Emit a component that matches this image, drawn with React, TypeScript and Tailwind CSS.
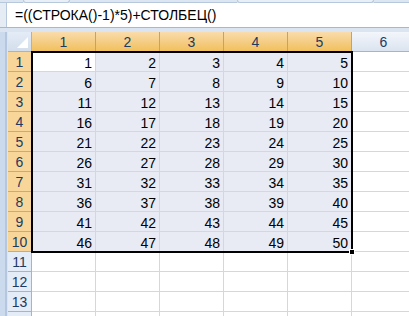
const COLS = [1, 2, 3, 4, 5, 6]
const ROWS = Array.from({ length: 14 }, (_, i) => i + 1)

function ColHeader({ n }: { n: number }) {
  const sel = n <= 5
  return (
    <div
      className={`h-5 w-16 shrink-0 border-r border-b flex items-center justify-center text-[14px] leading-none ${
        sel
          ? 'bg-gradient-to-b from-[#f9dcaa] to-[#f1c05c] border-r-[#f29536] border-b-[#f29536] text-[#1e3a5f]'
          : 'bg-gradient-to-b from-[#f3f6fb] to-[#dbe4f0] border-r-[#9eb6ce] border-b-[#9eb6ce] text-[#1e3a5f]'
      }`}
    >
      {n}
    </div>
  )
}

function RowHeader({ n }: { n: number }) {
  const sel = n <= 10
  return (
    <div
      className={`h-5 w-6 shrink-0 border-r border-b flex items-center justify-center text-[14px] leading-none ${
        sel
          ? 'bg-[#f8d598] border-r-[#f29536] border-b-[#f3a13f] text-[#1e3a5f]'
          : 'bg-[#e4ecf7] border-r-[#9eb6ce] border-b-[#9eb6ce] text-[#1e3a5f]'
      }`}
    >
      {/* row 14 only peeks in at the bottom edge */}
      {n < 14 ? n : ''}
    </div>
  )
}

function Cell({ r, c }: { r: number; c: number }) {
  const inRange = r <= 10 && c <= 5
  const active = r === 1 && c === 1
  const bg = inRange && !active ? 'bg-[#e8eaf4]' : 'bg-white'
  return (
    <div
      className={`h-5 w-16 shrink-0 border-r border-b border-[#d0d7e5] ${bg} flex items-end justify-end pr-[3px] pb-[1px] text-[14px] leading-none text-black`}
    >
      {inRange ? (r - 1) * 5 + c : ''}
    </div>
  )
}

export default function App() {
  return (
    <div
      className="w-[409px] h-[316px] overflow-hidden bg-white flex flex-col"
      style={{ fontFamily: '"Liberation Sans", Arial, sans-serif' }}
    >
      {/* ribbon edge */}
      <div className="h-[3px] shrink-0 bg-[#dce6f2] flex">
        <div className="w-[23px] border-b border-[#b7c7dc]" />
        <div className="w-[47px] border-x border-b border-[#b7c7dc] rounded-b-sm bg-[#e9eff7]" />
        <div className="w-[167px] border-b border-[#b7c7dc]" />
        <div className="w-[137px] border-x border-b border-[#b7c7dc] rounded-b-sm bg-[#e9eff7]" />
        <div className="flex-1 border-b border-[#b7c7dc]" />
      </div>

      {/* formula bar */}
      <div className="h-[25px] shrink-0 flex border-b border-[#a7b8cc]">
        <div className="w-[7px] bg-[#e6ecf4] border-r border-[#b7c7dc]" />
        <div className="flex-1 bg-white flex items-center pl-[8px] text-[14px] text-black">
          =((СТРОКА()-1)*5)+СТОЛБЕЦ()
        </div>
      </div>
      <div className="h-[4px] shrink-0 bg-[#dbe5f1]" />

      {/* sheet */}
      <div className="flex flex-1 min-h-0">
        <div className="w-[7px] shrink-0 bg-[#cbdaec] border-r-2 border-[#b4c7df]" />
        <div className="w-[1px] shrink-0 bg-[#dbe5f1]" />
        <div className="relative flex flex-col">
          <div className="flex">
            <div className="h-5 w-6 shrink-0 border-r border-b border-[#9eb6ce] bg-gradient-to-b from-[#e4ecf7] to-[#d3deec] relative">
              <div className="absolute right-[3px] bottom-[3px] w-0 h-0 border-l-[11px] border-l-transparent border-b-[11px] border-b-white" />
            </div>
            {COLS.map((c) => (
              <ColHeader key={c} n={c} />
            ))}
          </div>
          {ROWS.map((r) => (
            <div key={r} className="flex">
              <RowHeader n={r} />
              {COLS.map((c) => (
                <Cell key={c} r={r} c={c} />
              ))}
            </div>
          ))}

          {/* selection frame */}
          <div className="absolute left-[23px] top-[19px] w-[322px] h-[202px] border-2 border-black pointer-events-none" />
          <div className="absolute left-[341px] top-[217px] w-[6px] h-[6px] bg-black border border-white pointer-events-none" />
        </div>
      </div>
    </div>
  )
}
